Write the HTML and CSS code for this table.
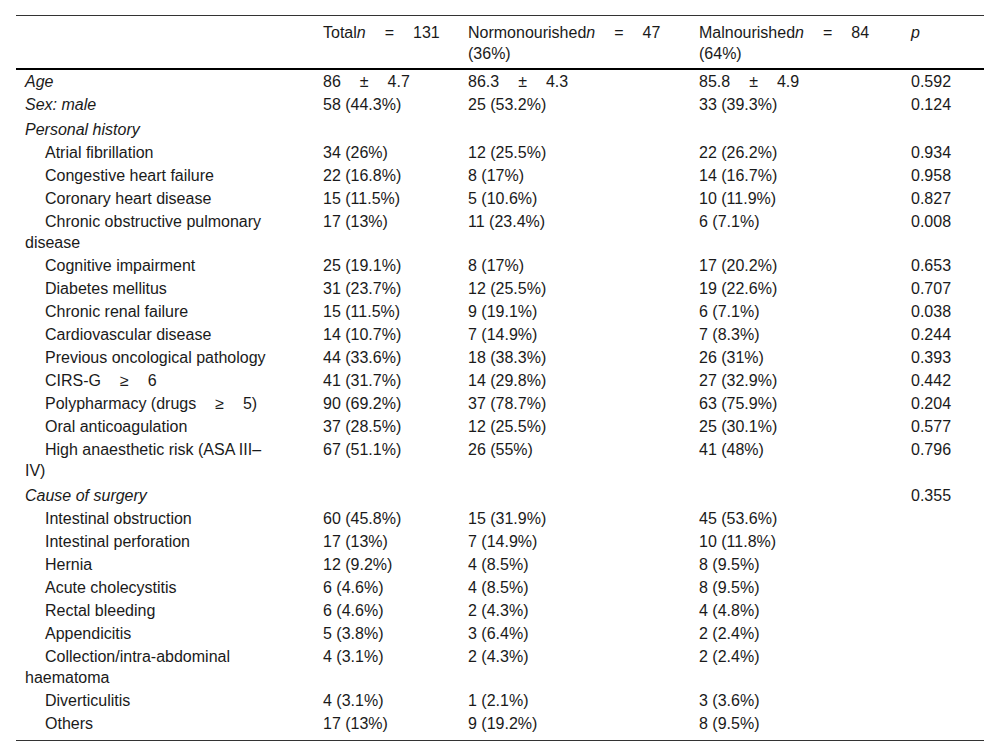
FILE: index.html
```html
<!DOCTYPE html>
<html>
<head>
<meta charset="utf-8">
<link rel="stylesheet" href="styles.css">
</head>
<body>
<div class="wrap">
<table class="tbl">
<colgroup>
<col class="c1"><col class="c2"><col class="c3"><col class="c4"><col class="c5">
</colgroup>
<thead>
<tr>
<th class="first"></th>
<th>Total<i>n</i><span class="sp"></span>=<span class="sp"></span>131</th>
<th>Normonourished<i>n</i><span class="sp"></span>=<span class="sp"></span>47 <span>(36%)</span></th>
<th>Malnourished<i>n</i><span class="sp"></span>=<span class="sp"></span>84 <span>(64%)</span></th>
<th><i>p</i></th>
</tr>
</thead>
<tbody>
<tr><td class="first"><i>Age</i></td><td>86<span class="sp"></span>±<span class="sp"></span>4.7</td><td>86.3<span class="sp"></span>±<span class="sp"></span>4.3</td><td>85.8<span class="sp"></span>±<span class="sp"></span>4.9</td><td>0.592</td></tr>
<tr><td class="first"><i>Sex: male</i></td><td>58 (44.3%)</td><td>25 (53.2%)</td><td>33 (39.3%)</td><td>0.124</td></tr>
<tr class="group"><td class="first"><i>Personal history</i></td><td></td><td></td><td></td><td></td></tr>
<tr><td class="first ind">Atrial fibrillation</td><td>34 (26%)</td><td>12 (25.5%)</td><td>22 (26.2%)</td><td>0.934</td></tr>
<tr><td class="first ind">Congestive heart failure</td><td>22 (16.8%)</td><td>8 (17%)</td><td>14 (16.7%)</td><td>0.958</td></tr>
<tr><td class="first ind">Coronary heart disease</td><td>15 (11.5%)</td><td>5 (10.6%)</td><td>10 (11.9%)</td><td>0.827</td></tr>
<tr><td class="first ind">Chronic obstructive pulmonary <span>disease</span></td><td>17 (13%)</td><td>11 (23.4%)</td><td>6 (7.1%)</td><td>0.008</td></tr>
<tr><td class="first ind">Cognitive impairment</td><td>25 (19.1%)</td><td>8 (17%)</td><td>17 (20.2%)</td><td>0.653</td></tr>
<tr><td class="first ind">Diabetes mellitus</td><td>31 (23.7%)</td><td>12 (25.5%)</td><td>19 (22.6%)</td><td>0.707</td></tr>
<tr><td class="first ind">Chronic renal failure</td><td>15 (11.5%)</td><td>9 (19.1%)</td><td>6 (7.1%)</td><td>0.038</td></tr>
<tr><td class="first ind">Cardiovascular disease</td><td>14 (10.7%)</td><td>7 (14.9%)</td><td>7 (8.3%)</td><td>0.244</td></tr>
<tr><td class="first ind">Previous oncological pathology</td><td>44 (33.6%)</td><td>18 (38.3%)</td><td>26 (31%)</td><td>0.393</td></tr>
<tr><td class="first ind">CIRS-G<span class="sp"></span>≥<span class="sp"></span>6</td><td>41 (31.7%)</td><td>14 (29.8%)</td><td>27 (32.9%)</td><td>0.442</td></tr>
<tr><td class="first ind">Polypharmacy (drugs<span class="sp"></span>≥<span class="sp"></span>5)</td><td>90 (69.2%)</td><td>37 (78.7%)</td><td>63 (75.9%)</td><td>0.204</td></tr>
<tr><td class="first ind">Oral anticoagulation</td><td>37 (28.5%)</td><td>12 (25.5%)</td><td>25 (30.1%)</td><td>0.577</td></tr>
<tr><td class="first ind">High anaesthetic risk (ASA III–<span>IV)</span></td><td>67 (51.1%)</td><td>26 (55%)</td><td>41 (48%)</td><td>0.796</td></tr>
<tr class="group"><td class="first"><i>Cause of surgery</i></td><td></td><td></td><td></td><td>0.355</td></tr>
<tr><td class="first ind">Intestinal obstruction</td><td>60 (45.8%)</td><td>15 (31.9%)</td><td>45 (53.6%)</td><td></td></tr>
<tr><td class="first ind">Intestinal perforation</td><td>17 (13%)</td><td>7 (14.9%)</td><td>10 (11.8%)</td><td></td></tr>
<tr><td class="first ind">Hernia</td><td>12 (9.2%)</td><td>4 (8.5%)</td><td>8 (9.5%)</td><td></td></tr>
<tr><td class="first ind">Acute cholecystitis</td><td>6 (4.6%)</td><td>4 (8.5%)</td><td>8 (9.5%)</td><td></td></tr>
<tr><td class="first ind">Rectal bleeding</td><td>6 (4.6%)</td><td>2 (4.3%)</td><td>4 (4.8%)</td><td></td></tr>
<tr><td class="first ind">Appendicitis</td><td>5 (3.8%)</td><td>3 (6.4%)</td><td>2 (2.4%)</td><td></td></tr>
<tr><td class="first ind">Collection/intra-abdominal <span>haematoma</span></td><td>4 (3.1%)</td><td>2 (4.3%)</td><td>2 (2.4%)</td><td></td></tr>
<tr><td class="first ind">Diverticulitis</td><td>4 (3.1%)</td><td>1 (2.1%)</td><td>3 (3.6%)</td><td></td></tr>
<tr class="last"><td class="first ind">Others</td><td>17 (13%)</td><td>9 (19.2%)</td><td>8 (9.5%)</td><td></td></tr>
</tbody>
</table>
</div>
</body>
</html>
```
FILE: styles.css
```css
html, body {
  margin: 0;
  padding: 0;
  background: #fff;
}
body {
  font-family: "Liberation Sans", Arial, sans-serif;
  font-size: 16px;
  color: #1a1a1a;
}
.wrap {
  padding: 15px 16px 0 16px;
}
.tbl {
  width: 968px;
  border-collapse: collapse;
  table-layout: fixed;
  border-top: 1px solid #333;
  border-bottom: 1px solid #333;
}
.c1 { width: 298px; }
.c2 { width: 145px; }
.c3 { width: 231px; }
.c4 { width: 212px; }
.c5 { width: 82px; }
.tbl th {
  font-weight: normal;
  text-align: left;
  vertical-align: top;
  line-height: 21px;
  padding: 6px 9px 4px 9px;
}
.tbl thead tr {
  border-bottom: 2px solid #000;
}
.tbl td {
  vertical-align: top;
  line-height: 21px;
  padding: 1px 9px 1px 9px;
}
.tbl td.first {
  padding-right: 38px;
}
.tbl td.ind {
  text-indent: 20px;
}
.tbl tr.group td {
  padding-top: 3px;
}
.tbl tr.last td {
  padding-bottom: 6px;
}
.sp {
  display: inline-block;
  width: 19px;
}
.tbl i {
  font-style: italic;
}
```
